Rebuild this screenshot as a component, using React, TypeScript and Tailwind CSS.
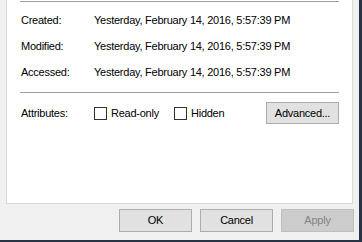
import type { ReactNode } from "react";

const font = { fontFamily: '"Liberation Sans", Arial, sans-serif' };

function InfoRow({ label, value }: { label: string; value: string }) {
  return (
    <div className="flex h-[26px] items-center">
      <span className="w-[74px] pl-px">{label}</span>
      <span>{value}</span>
    </div>
  );
}

function Checkbox({ label, className }: { label: string; className?: string }) {
  return (
    <label className={"flex items-center gap-[4px] " + (className ?? "")}>
      <span className="h-[13px] w-[13px] border border-[#333333] bg-white" />
      <span>{label}</span>
    </label>
  );
}

function DialogButton({
  children,
  disabled,
  className,
}: {
  children: ReactNode;
  disabled?: boolean;
  className?: string;
}) {
  return (
    <button
      type="button"
      disabled={disabled}
      className={
        "flex items-center justify-center border " +
        (disabled
          ? "border-[#bfbfbf] bg-[#cccccc] text-[#838383]"
          : "border-[#adadad] bg-[#e1e1e1] text-black") +
        " " +
        (className ?? "")
      }
    >
      {children}
    </button>
  );
}

export default function App() {
  const stamp = "Yesterday, February 14, 2016, 5:57:39 PM";

  return (
    <div
      style={font}
      className="flex h-[242px] w-[362px] flex-col border-b-2 border-r-[3px] border-[#263445] bg-[#f0f0f0] text-[11px] tracking-[-0.25px] text-black"
    >
      <div className="px-[6px]">
        <div className="h-[204px] border-x border-b border-[#d9d9d9] bg-white px-[13px] pt-px">
          <div className="h-px bg-[#a0a0a0]" />
          <div className="pt-[5px]">
            <InfoRow label="Created:" value={stamp} />
            <InfoRow label="Modified:" value={stamp} />
            <InfoRow label="Accessed:" value={stamp} />
          </div>
          <div className="mt-[7px] h-px bg-[#a0a0a0]" />
          <div className="mt-[9px] flex items-center">
            <span className="w-[74px] pl-px">Attributes:</span>
            <Checkbox label="Read-only" className="w-[80px]" />
            <Checkbox label="Hidden" />
            <DialogButton className="ml-auto h-[22px] w-[73px]">Advanced...</DialogButton>
          </div>
        </div>
      </div>

      <div className="mt-[5px] flex justify-end gap-[8px] pr-[5px]">
        <DialogButton className="h-[23px] w-[73px]">OK</DialogButton>
        <DialogButton className="h-[23px] w-[73px]">Cancel</DialogButton>
        <DialogButton disabled className="h-[23px] w-[73px]">
          Apply
        </DialogButton>
      </div>
    </div>
  );
}
